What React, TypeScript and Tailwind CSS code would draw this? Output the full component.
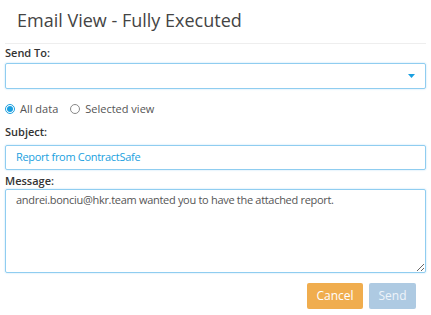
export default function App() {
  return (
    <div className="w-[431px] h-[315px] bg-white px-[5px] text-[#333]" style={{ fontFamily: '"Open Sans", sans-serif' }}>
      {/* Header */}
      <div className="pt-[8px] pb-[11px] pl-[12px] border-b border-[#eeeeee]">
        <h1 className="text-[18px] leading-[24px] font-normal text-[#444]">Email View - Fully Executed</h1>
      </div>

      {/* Send To */}
      <label className="block text-[11px] leading-[16px] font-semibold mt-[1px]">Send To:</label>
      <div className="mt-[2px] h-[26px] border border-[#8fcdf0] rounded-[2px] shadow-[0_0_2px_#b5def5] flex items-center justify-end pr-[10px]">
        <svg width="7" height="4" viewBox="0 0 7 4">
          <path d="M0 0 L7 0 L3.5 4 Z" fill="#1a9fe0" />
        </svg>
      </div>

      {/* View options */}
      <div className="flex items-center h-[16px] mt-[12px] text-[11px] text-[#555]">
        <span className="w-[10px] h-[10px] rounded-full border border-[#1a9fe0] flex items-center justify-center">
          <span className="w-[6px] h-[6px] rounded-full bg-[#1a9fe0]"></span>
        </span>
        <span className="ml-[5px]">All data</span>
        <span className="ml-[12px] w-[10px] h-[10px] rounded-full border border-[#888]"></span>
        <span className="ml-[5px]">Selected view</span>
      </div>

      {/* Subject */}
      <label className="block text-[11px] leading-[16px] font-semibold mt-[7px]">Subject:</label>
      <div className="mt-[5px] h-[25px] border border-[#8fcdf0] rounded-[2px] shadow-[0_0_2px_#b5def5] flex items-center pl-[10px] text-[11px] tracking-[-0.3px] text-[#1a9fe0]">
        Report from ContractSafe
      </div>

      {/* Message */}
      <label className="block text-[11px] leading-[16px] font-semibold mt-[3px]">Message:</label>
      <textarea
        className="block w-full h-[84px] border border-[#8fcdf0] rounded-[2px] shadow-[0_0_2px_#b5def5] px-[10px] py-[2px] text-[11px] leading-[16px] tracking-[-0.3px] text-[#555] outline-none"
        defaultValue="andrei.bonciu@hkr.team wanted you to have the attached report."
      />

      {/* Actions */}
      <div className="flex justify-end gap-[6px] mt-[10px] pr-[10px]">
        <button className="w-[56px] h-[26px] bg-[#f0ad4e] rounded-[2px] text-white text-[12px]">Cancel</button>
        <button className="w-[47px] h-[26px] bg-[#aecae2] rounded-[2px] text-[#eef4fa] text-[12px]">Send</button>
      </div>
    </div>
  );
}
